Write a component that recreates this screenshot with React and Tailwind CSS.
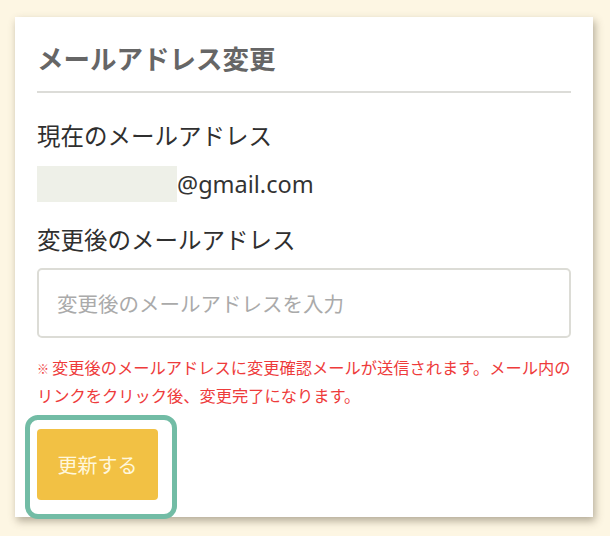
export default function App() {
  return (
    <div className="w-[610px] h-[536px] bg-[#fdf6e3] pt-[17px] pl-[15px] font-['Noto_Sans_CJK_JP','Noto_Sans',sans-serif]">
      <div className="relative w-[578px] h-[500px] bg-white shadow-[2px_4px_8px_rgba(90,80,60,0.45)] px-[22px]">
        <h1 className="pt-[22px] pb-[14px] text-[26.5px] leading-[38px] font-bold text-[#666] border-b-2 border-[#dcdcd8]">
          メールアドレス変更
        </h1>

        <p className="mt-[25px] text-[23.5px] leading-[34px] font-normal text-[#2f2f2f]">現在のメールアドレス</p>
        <div className="mt-[14px] flex items-center">
          <span className="w-[140px] h-[36px] bg-[#eef0e8]" />
          <span className="text-[23.5px] leading-[36px] text-[#333] font-['Noto_Sans',sans-serif]">@gmail.com</span>
        </div>

        <p className="mt-[20px] text-[23.5px] leading-[34px] font-normal text-[#2f2f2f]">変更後のメールアドレス</p>
        <input
          type="text"
          placeholder="変更後のメールアドレスを入力"
          className="mt-[12px] block w-full h-[70px] rounded-[5px] border-2 border-[#dcdcd6] px-[18px] text-[20.5px] placeholder:text-[#aaa] outline-none"
        />

        <p className="mt-[16px] text-[16.25px] leading-[27px] text-[#ee3b3b] whitespace-nowrap">
          <span className="text-[12px] mr-[3px]">※</span>変更後のメールアドレスに変更確認メールが送信されます。メール内の
          <br />
          リンクをクリック後、変更完了になります。
        </p>

        <button className="mt-[20px] w-[121px] h-[71px] rounded-[4px] bg-[#f2c144] text-[20px] font-normal text-[#fff7dc]">
          更新する
        </button>

        <div className="absolute left-[10px] top-[398px] w-[152px] h-[104px] rounded-[13px] border-[5px] border-[#72bca5]" />
      </div>
    </div>
  );
}
